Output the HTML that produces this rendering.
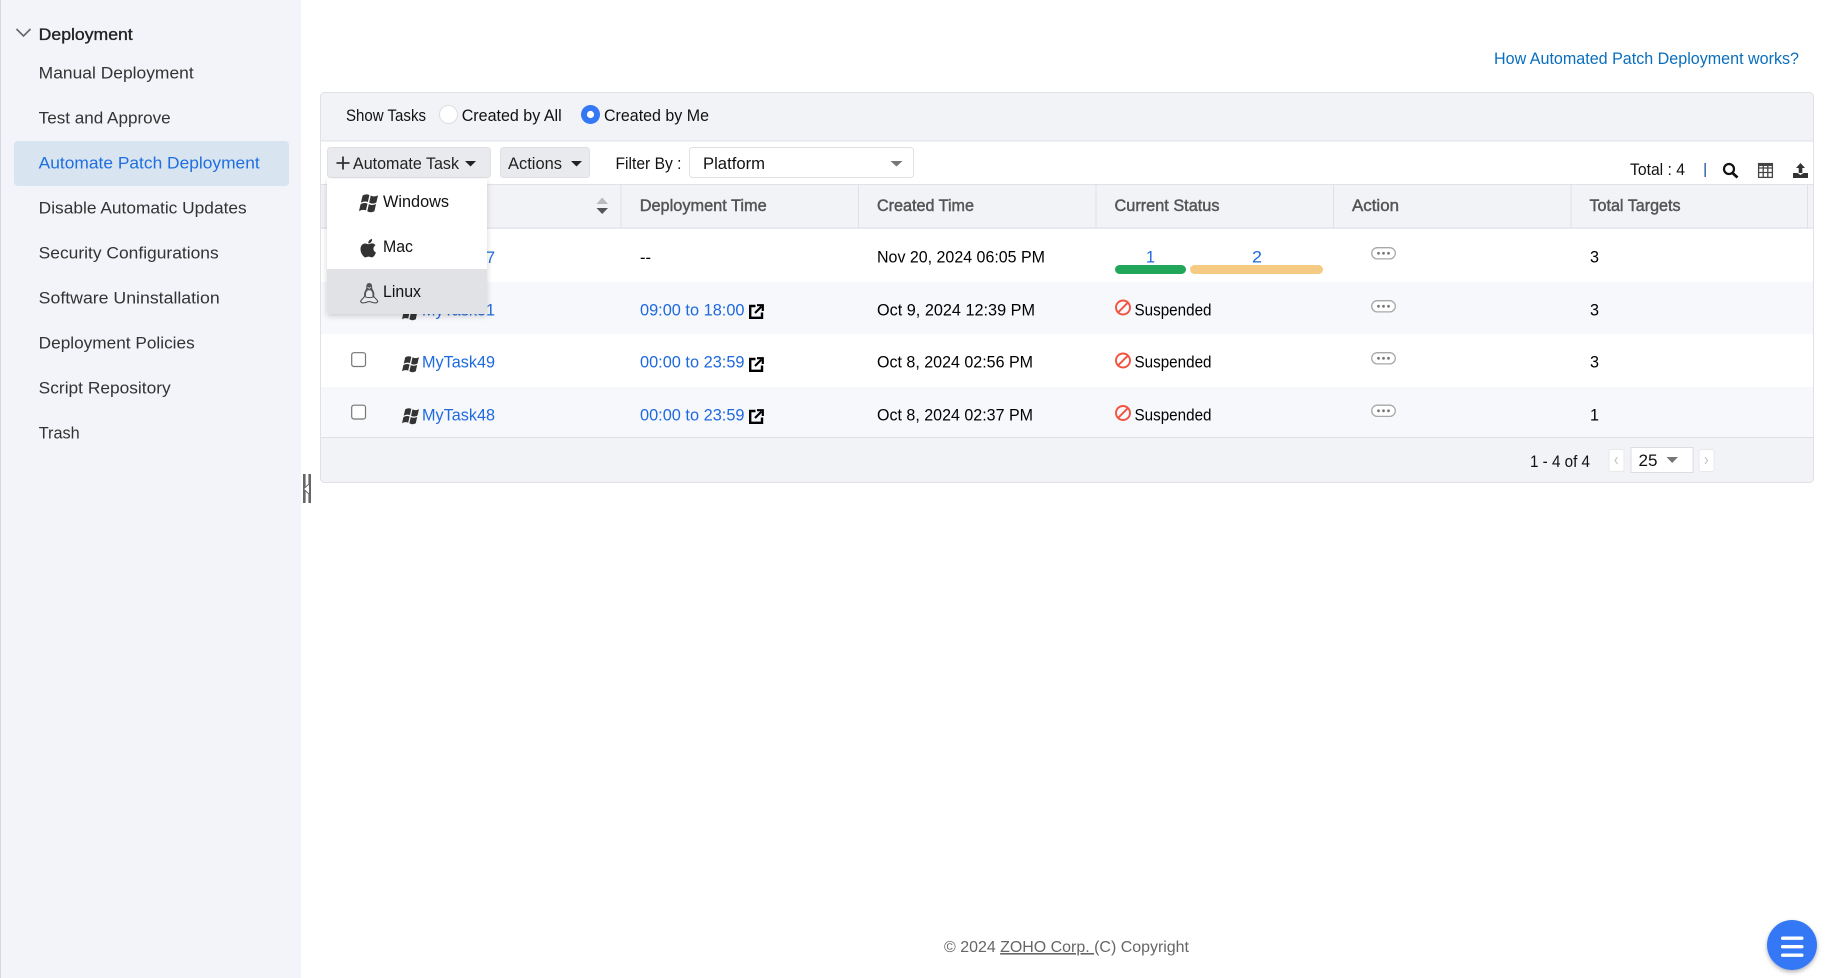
<!DOCTYPE html>
<html lang="en">
<head>
<meta charset="utf-8">
<title>Automate Patch Deployment</title>
<style>
html,body{margin:0;padding:0;background:#fff;width:1826px;height:978px;overflow:hidden}
svg{display:block}
text{font-family:"Liberation Sans",Arial,sans-serif;font-size:16.5px;fill:#000}
.nav{fill:#333}
.hd{fill:#555;stroke:#555;stroke-width:.45px}
.lnk{fill:#1e69de}
.foot{fill:#666;font-size:16px}
</style>
</head>
<body>
<svg width="1826" height="978" viewBox="0 0 1826 978" xmlns="http://www.w3.org/2000/svg">
<defs>
<g id="win">
<path d="M3.2 1.9C5.4.6 7.4.5 9.3 1.4L7.9 7.6C6 6.8 3.9 6.9 1.7 8.2Z"/>
<path d="M10.5 1.8C12.4 2.9 14.6 2.9 17 1.6L15.5 8C13.1 9.3 11 9.3 9.1 8.2Z"/>
<path d="M1.4 9.6C3.6 8.3 5.7 8.2 7.6 9L6.2 15.1C4.3 14.3 2.2 14.4 0 15.7Z"/>
<path d="M8.8 9.5C10.7 10.6 12.9 10.6 15.2 9.3L13.8 15.7C11.4 17 9.3 17 7.4 15.8Z"/>
</g>
<g id="ext" fill="none" stroke="#000">
<path d="M6.5 2H1.2V13.8H13V8.5" stroke-width="2.4"/>
<path d="M6 9L12.5 2.5" stroke-width="2.2"/>
<path d="M8 1.2H13.8V7" stroke-width="2.2"/>
</g>
<g id="ban" fill="none" stroke="#f3523f">
<circle cx="8" cy="8" r="7" stroke-width="1.9"/>
<path d="M3.2 12.8L12.8 3.2" stroke-width="1.9"/>
</g>
<g id="more">
<rect x=".7" y=".7" width="23.6" height="11.2" rx="5.6" fill="#fff" stroke="#a8a8a8" stroke-width="1.3"/>
<circle cx="7.5" cy="6.3" r="1.4" fill="#777"/><circle cx="12.5" cy="6.3" r="1.4" fill="#777"/><circle cx="17.5" cy="6.3" r="1.4" fill="#777"/>
</g>
<g id="cb"><rect x=".7" y=".7" width="13.8" height="13.8" rx="2.2" fill="#fff" stroke="#767676" stroke-width="1.2"/></g>
</defs>

<!-- Sidebar -->
<rect x="0" y="0" width="301" height="978" fill="#f2f4f9"/>
<rect x="0" y="0" width="1" height="978" fill="#d5d8df"/>
<path d="M16.5 29L23.5 36L30.5 29" fill="none" stroke="#666" stroke-width="1.6"/>
<text x="38.7" y="40" textLength="94" lengthAdjust="spacingAndGlyphs" style="fill:#222;stroke:#222;stroke-width:.35px">Deployment</text>
<text class="nav" x="38.7" y="78.5" textLength="155" lengthAdjust="spacingAndGlyphs">Manual Deployment</text>
<text class="nav" x="38.7" y="123.5" textLength="132" lengthAdjust="spacingAndGlyphs">Test and Approve</text>
<rect x="14" y="141" width="275" height="45" rx="4" fill="#d8e4f0"/>
<text x="38.7" y="168.5" textLength="221" lengthAdjust="spacingAndGlyphs" style="fill:#1f6fe0">Automate Patch Deployment</text>
<text class="nav" x="38.7" y="213.5" textLength="208" lengthAdjust="spacingAndGlyphs">Disable Automatic Updates</text>
<text class="nav" x="38.7" y="258.5" textLength="180" lengthAdjust="spacingAndGlyphs">Security Configurations</text>
<text class="nav" x="38.7" y="303.5" textLength="181" lengthAdjust="spacingAndGlyphs">Software Uninstallation</text>
<text class="nav" x="38.7" y="348.5" textLength="156" lengthAdjust="spacingAndGlyphs">Deployment Policies</text>
<text class="nav" x="38.7" y="393.5" textLength="132" lengthAdjust="spacingAndGlyphs">Script Repository</text>
<text class="nav" x="38.7" y="438.5" textLength="41" lengthAdjust="spacingAndGlyphs">Trash</text>

<!-- Resize handle -->
<rect x="303" y="474" width="2.6" height="29" fill="#666"/>
<rect x="308.4" y="474" width="2.6" height="29" fill="#666"/>
<path d="M303.5 489L309.5 483.5V494.5Z" fill="#fff" stroke="#666" stroke-width="1"/>

<!-- Top link -->
<text x="1494" y="64" textLength="305" lengthAdjust="spacingAndGlyphs" style="fill:#0a6ebd">How Automated Patch Deployment works?</text>

<!-- Panel -->
<rect x="320.5" y="92.5" width="1493" height="390" rx="4" fill="#f2f3f7" stroke="#dfe1e7"/>
<rect x="321" y="141" width="1492" height="43" fill="#fff"/>
<rect x="321" y="140.5" width="1492" height="1" fill="#dfe1e7"/>
<rect x="321" y="184" width="1492" height="1" fill="#dfe1e7"/>

<text x="346" y="121" textLength="80" lengthAdjust="spacingAndGlyphs" style="fill:#111">Show Tasks</text>
<circle cx="448.5" cy="114.5" r="9" fill="#fff" stroke="#dcdde2"/>
<text x="461.7" y="121" textLength="100" lengthAdjust="spacingAndGlyphs" style="fill:#111">Created by All</text>
<circle cx="590.5" cy="114.5" r="9.5" fill="#3578f6"/>
<circle cx="590.5" cy="114.5" r="3.6" fill="#fff"/>
<text x="604" y="121" textLength="105" lengthAdjust="spacingAndGlyphs" style="fill:#111">Created by Me</text>

<!-- Toolbar -->
<rect x="327.5" y="147.5" width="163" height="30" rx="3" fill="#e9eaee" stroke="#dfe0e5"/>
<path d="M343 156.5V169.5M336.5 163H349.5" stroke="#333" stroke-width="1.8"/>
<text x="353" y="169" textLength="106" lengthAdjust="spacingAndGlyphs" style="fill:#222">Automate Task</text>
<path d="M465 161H476L470.5 166.5Z" fill="#222"/>
<rect x="500.5" y="147.5" width="89" height="30" rx="3" fill="#e9eaee" stroke="#dfe0e5"/>
<text x="508" y="169" textLength="54" lengthAdjust="spacingAndGlyphs" style="fill:#222">Actions</text>
<path d="M571 161H582L576.5 166.5Z" fill="#222"/>
<text x="615.5" y="169" textLength="66" lengthAdjust="spacingAndGlyphs" style="fill:#111">Filter By :</text>
<rect x="689.5" y="147.5" width="224" height="30" rx="3" fill="#fff" stroke="#dfe1e7"/>
<text x="703" y="169" textLength="62" lengthAdjust="spacingAndGlyphs" style="fill:#111">Platform</text>
<path d="M890.5 161H902.5L896.5 166.5Z" fill="#777"/>

<text x="1630" y="175" textLength="55" lengthAdjust="spacingAndGlyphs" style="fill:#111">Total : 4</text>
<rect x="1704.5" y="163" width="1.3" height="14" fill="#1c4f9c"/>
<g fill="none" stroke="#111"><circle cx="1729" cy="169" r="5" stroke-width="2.2"/><path d="M1732.5 173L1737.5 177.5" stroke-width="2.8"/></g>
<g fill="none" stroke="#444" stroke-width="1.3">
<rect x="1758.6" y="163.6" width="13.8" height="13.8"/>
<path d="M1758.6 168H1772.4M1758.6 172.5H1772.4M1763.2 164V177M1767.8 164V177"/>
</g>
<rect x="1758" y="163" width="15" height="3" fill="#444"/>
<path d="M1800.5 163L1805 168H1802.3V173H1798.7V168H1796Z" fill="#333"/>
<path d="M1793 173H1797.5L1800.5 175L1803.5 173H1808V178H1793Z" fill="#333"/>

<!-- Header -->
<rect x="321" y="185" width="1492" height="43" fill="#f2f3f7"/>
<rect x="321" y="227.5" width="1492" height="1.3" fill="#dfe1e7"/>
<g fill="#dfe1e7"><rect x="620.5" y="185" width="1" height="43"/><rect x="858" y="185" width="1" height="43"/><rect x="1095.5" y="185" width="1" height="43"/><rect x="1333" y="185" width="1" height="43"/><rect x="1570.5" y="185" width="1" height="43"/><rect x="1807" y="185" width="1" height="43"/></g>
<path d="M596.5 204H608L602.2 197.5Z" fill="#bbb"/>
<path d="M596.5 208H608L602.2 214Z" fill="#555"/>
<text class="hd" x="639.7" y="211" textLength="127" lengthAdjust="spacingAndGlyphs">Deployment Time</text>
<text class="hd" x="877" y="211" textLength="97" lengthAdjust="spacingAndGlyphs">Created Time</text>
<text class="hd" x="1114.5" y="211" textLength="105" lengthAdjust="spacingAndGlyphs">Current Status</text>
<text class="hd" x="1352" y="211" textLength="47" lengthAdjust="spacingAndGlyphs">Action</text>
<text class="hd" x="1589.5" y="211" textLength="91" lengthAdjust="spacingAndGlyphs">Total Targets</text>

<!-- Rows -->
<rect x="321" y="228.8" width="1492" height="53.2" fill="#fff"/>
<rect x="321" y="282" width="1492" height="52" fill="#f7f8fc"/>
<rect x="321" y="334" width="1492" height="53" fill="#fff"/>
<rect x="321" y="387" width="1492" height="50" fill="#f7f8fc"/>
<rect x="321" y="437" width="1492" height="1" fill="#dfe1e7"/>

<!-- Row 1 -->
<text class="lnk" x="422" y="263" textLength="73" lengthAdjust="spacingAndGlyphs">MyTask57</text>
<text x="640" y="263" textLength="11" lengthAdjust="spacingAndGlyphs">--</text>
<text x="877" y="262.5" textLength="168" lengthAdjust="spacingAndGlyphs">Nov 20, 2024 06:05 PM</text>
<text class="lnk" x="1146" y="262.5" textLength="9" lengthAdjust="spacingAndGlyphs">1</text>
<text class="lnk" x="1252" y="262.5" textLength="10" lengthAdjust="spacingAndGlyphs">2</text>
<rect x="1115" y="265" width="71" height="9" rx="4.5" fill="#22a65a"/>
<rect x="1190" y="265" width="133" height="9" rx="4.5" fill="#f5ca82"/>
<use href="#more" x="1371" y="247"/>
<text x="1590" y="262.5" textLength="9" lengthAdjust="spacingAndGlyphs">3</text>

<!-- Row 2 -->
<use href="#win" x="402" y="303.5" fill="#333"/>
<text class="lnk" x="422" y="315.5" textLength="73" lengthAdjust="spacingAndGlyphs">MyTask51</text>
<text class="lnk" x="640" y="315.5" textLength="104.5" lengthAdjust="spacingAndGlyphs">09:00 to 18:00</text>
<use href="#ext" x="749" y="304"/>
<text x="877" y="315.5" textLength="158" lengthAdjust="spacingAndGlyphs">Oct 9, 2024 12:39 PM</text>
<use href="#ban" x="1115" y="299.5"/>
<text x="1134.5" y="315.5" textLength="77" lengthAdjust="spacingAndGlyphs">Suspended</text>
<use href="#more" x="1371" y="300"/>
<text x="1590" y="315.5" textLength="9" lengthAdjust="spacingAndGlyphs">3</text>

<!-- Row 3 -->
<use href="#cb" x="351" y="352"/>
<use href="#win" x="402" y="355.5" fill="#333"/>
<text class="lnk" x="422" y="367.5" textLength="73" lengthAdjust="spacingAndGlyphs">MyTask49</text>
<text class="lnk" x="640" y="367.5" textLength="104.5" lengthAdjust="spacingAndGlyphs">00:00 to 23:59</text>
<use href="#ext" x="749" y="357"/>
<text x="877" y="367.5" textLength="156" lengthAdjust="spacingAndGlyphs">Oct 8, 2024 02:56 PM</text>
<use href="#ban" x="1115" y="352.5"/>
<text x="1134.5" y="367.5" textLength="77" lengthAdjust="spacingAndGlyphs">Suspended</text>
<use href="#more" x="1371" y="352"/>
<text x="1590" y="367.5" textLength="9" lengthAdjust="spacingAndGlyphs">3</text>

<!-- Row 4 -->
<use href="#cb" x="351" y="404.5"/>
<use href="#win" x="402" y="407.5" fill="#333"/>
<text class="lnk" x="422" y="420.5" textLength="73" lengthAdjust="spacingAndGlyphs">MyTask48</text>
<text class="lnk" x="640" y="420.5" textLength="104.5" lengthAdjust="spacingAndGlyphs">00:00 to 23:59</text>
<use href="#ext" x="749" y="409"/>
<text x="877" y="420.5" textLength="156" lengthAdjust="spacingAndGlyphs">Oct 8, 2024 02:37 PM</text>
<use href="#ban" x="1115" y="405"/>
<text x="1134.5" y="420.5" textLength="77" lengthAdjust="spacingAndGlyphs">Suspended</text>
<use href="#more" x="1371" y="404.5"/>
<text x="1590" y="420.5" textLength="9" lengthAdjust="spacingAndGlyphs">1</text>

<!-- Pagination -->
<text x="1530" y="467" textLength="60" lengthAdjust="spacingAndGlyphs" style="fill:#111">1 - 4 of 4</text>
<rect x="1609" y="449.5" width="15" height="22" rx="2" fill="#fff" stroke="#e8e9ed"/>
<path d="M1617.5 457L1615 460.5L1617.5 464" fill="none" stroke="#bbb"/>
<rect x="1631" y="447.5" width="62" height="25" fill="#fff" stroke="#dcdee3"/>
<text x="1638.5" y="466" textLength="19" lengthAdjust="spacingAndGlyphs" style="fill:#111">25</text>
<path d="M1666.5 457H1678L1672.2 463Z" fill="#777"/>
<rect x="1699" y="449.5" width="15" height="22" rx="2" fill="#fff" stroke="#e8e9ed"/>
<path d="M1705 457L1707.5 460.5L1705 464" fill="none" stroke="#bbb"/>

<!-- Dropdown -->
<filter id="sh" x="-10%" y="-10%" width="120%" height="125%"><feDropShadow dx="0" dy="2" stdDeviation="3" flood-color="#000" flood-opacity=".18"/></filter>
<rect x="327" y="179" width="160" height="135" rx="2" fill="#fff" filter="url(#sh)"/>
<path d="M327 269H487V312a2 2 0 0 1-2 2H329a2 2 0 0 1-2-2Z" fill="#e1e2e6"/>
<use href="#win" transform="translate(359 193.5) scale(1.12)" fill="#333"/>
<text x="383" y="207" textLength="66" lengthAdjust="spacingAndGlyphs" style="fill:#111">Windows</text>
<path transform="translate(356 236) scale(1.02)" fill="#333" d="M17.05 20.28c-.98.95-2.05.8-3.08.35-1.09-.46-2.09-.48-3.24 0-1.44.62-2.2.44-3.06-.35C2.79 15.25 3.51 7.59 9.05 7.31c1.35.07 2.29.74 3.08.8 1.18-.24 2.31-.93 3.57-.84 1.51.12 2.65.72 3.4 1.8-3.12 1.87-2.38 5.98.48 7.13-.57 1.5-1.31 2.99-2.54 4.09zM12.03 7.25c-.15-2.23 1.66-4.07 3.74-4.25.29 2.58-2.34 4.5-3.74 4.25z"/>
<text x="383" y="252" textLength="30" lengthAdjust="spacingAndGlyphs" style="fill:#111">Mac</text>
<path d="M369.2 283C366.9 283 366.2 285 366.3 287.2C366.3 288.6 365.6 289.6 364.9 291C364.1 292.6 363.8 294.4 364.2 296L368 296.5L374 296.5C374.7 294.5 374.4 292.5 373.6 291C372.9 289.6 372.1 288.6 372.1 287.2C372.2 285 371.5 283 369.2 283Z" fill="#555"/>
<path d="M367 291C366 292.5 365.7 294.5 366.2 297H372.2C372.8 294.5 372.4 292.5 371.4 291C370.5 290 368 290 367 291Z" fill="#e8e9ec"/>
<path d="M364.5 296.5C363.2 298.4 361 300 360.6 301.4C361.4 303.4 364.6 302.9 366.8 302.1C368.4 301.5 370 301.5 371.6 302.1C373.8 302.9 377 303.4 377.8 301.4C377.4 300 375.2 298.4 373.8 296.5C372 298 367 298 364.5 296.5Z" fill="#e8e9ec" stroke="#444" stroke-width="1"/>
<path d="M367.6 287.2L369.2 288.4L370.8 287.2" fill="none" stroke="#e8e9ec" stroke-width=".8"/>
<text x="383" y="297" textLength="38" lengthAdjust="spacingAndGlyphs" style="fill:#111">Linux</text>

<!-- Footer -->
<text class="foot" x="944" y="952" textLength="245" lengthAdjust="spacingAndGlyphs">© 2024 <tspan text-decoration="underline">ZOHO Corp. </tspan>(C) Copyright</text>

<!-- FAB -->
<filter id="fs" x="-30%" y="-30%" width="160%" height="160%"><feDropShadow dx="0" dy="2" stdDeviation="2" flood-color="#000" flood-opacity=".3"/></filter>
<circle cx="1792" cy="945" r="25" fill="#3578f6" filter="url(#fs)"/>
<g fill="#fff"><rect x="1781" y="936.5" width="22.5" height="3.4" rx="1.7"/><rect x="1781" y="945" width="22.5" height="3.4" rx="1.7"/><rect x="1781" y="953.5" width="22.5" height="3.4" rx="1.7"/></g>
</svg>
</body>
</html>
